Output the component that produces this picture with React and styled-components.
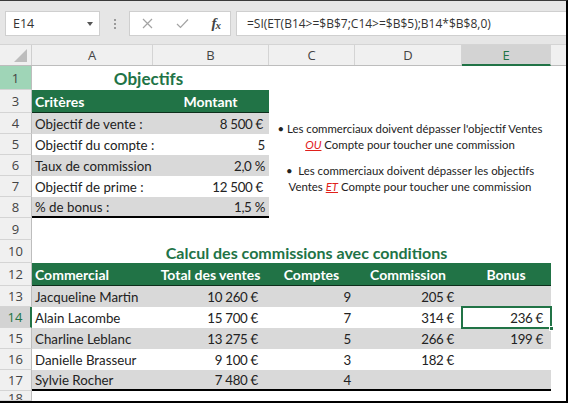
import React from 'react';
import styled, { createGlobalStyle, css } from 'styled-components';

const W = { A: 121, B: 116, C: 86, D: 107, E: 89 };
const GREEN = '#217346';

const Global = createGlobalStyle`
  html, body { margin: 0; background: #fff; }
`;

const Frame = styled.div`
  position: relative;
  width: 568px;
  height: 403px;
  box-sizing: border-box;
  border-top: 1px solid #3a3a3a;
  border-right: 2px solid #000;
  border-bottom: 2px solid #000;
  background: #fff;
  overflow: hidden;
  display: flex;
  flex-direction: column;
  font-family: Lato, "Open Sans", sans-serif;
`;

const Toolbar = styled.div`
  height: 43px;
  flex-shrink: 0;
  box-sizing: border-box;
  background: #e6e6e6;
  display: flex;
  align-items: flex-start;
  padding: 10px 0 0 5px;
`;

const Box = styled.div`
  height: 25px;
  box-sizing: border-box;
  background: #fff;
  border: 1px solid #cfcfcf;
  display: flex;
  align-items: center;
  flex-shrink: 0;
`;

const NameBox = styled(Box)`
  width: 95px;
  padding: 0 6px 0 7px;
  justify-content: space-between;
  font-family: "Open Sans", sans-serif;
  font-size: 12.5px;
  color: #333;
`;

const Caret = styled.span`
  width: 0;
  height: 0;
  border-left: 3px solid transparent;
  border-right: 3px solid transparent;
  border-top: 4px solid #555;
`;

const Dots = styled.div`
  width: 29px;
  height: 25px;
  display: flex;
  flex-direction: column;
  align-items: center;
  justify-content: center;
  gap: 2px;
  flex-shrink: 0;
  span {
    width: 2px;
    height: 2px;
    background: #9a9a9a;
  }
`;

const FxBox = styled(Box)`
  width: 102px;
  padding: 0 10px 0 12px;
  justify-content: space-between;
`;

const Fx = styled.span`
  font-family: "Liberation Serif", serif;
  font-style: italic;
  font-weight: bold;
  font-size: 15px;
  color: #444;
  letter-spacing: -1px;
  sub {
    font-size: 11px;
    vertical-align: -1px;
  }
`;

const FormulaBox = styled(Box)`
  margin-left: 5px;
  flex: 1;
  border-right: none;
  padding-left: 10px;
  font-family: "Open Sans", sans-serif;
  font-size: 12px;
  color: #333;
  white-space: nowrap;
  overflow: hidden;
`;

const HeaderRow = styled.div`
  display: flex;
  height: 22px;
  flex-shrink: 0;
  box-sizing: border-box;
  border-top: 1px solid #d4d4d4;
  border-bottom: 1px solid #bdbdbd;
  background: #f0f0f0;
`;

const Corner = styled.div`
  width: 32px;
  flex-shrink: 0;
  box-sizing: border-box;
  border-right: 1px solid #cfcfcf;
  display: flex;
  align-items: flex-end;
  justify-content: flex-end;
  padding: 0 4px 3px 0;
`;

const ColHead = styled.div`
  width: ${(p) => p.$w}px;
  flex-shrink: 0;
  box-sizing: border-box;
  border-right: 1px solid #d4d4d4;
  display: flex;
  align-items: center;
  justify-content: center;
  font-family: "Open Sans", sans-serif;
  font-size: 13px;
  color: #444;
  ${(p) =>
    p.$active &&
    css`
      background: #d3d3d3;
      color: ${GREEN};
      border-bottom: 2px solid ${GREEN};
      margin-bottom: -1px;
    `}
`;

const Filler = styled.div`
  flex: 1;
`;

const Row = styled.div`
  display: flex;
  height: ${(p) => p.$h}px;
  flex-shrink: 0;
  overflow: hidden;
`;

const RowHead = styled.div`
  width: 32px;
  flex-shrink: 0;
  box-sizing: border-box;
  background: ${(p) => (p.$hl ? '#9fd5b7' : p.$active ? '#d3d3d3' : '#f0f0f0')};
  border-bottom: 1px solid #d4d4d4;
  border-right: ${(p) => (p.$active ? `2px solid ${GREEN}` : '1px solid #bdbdbd')};
  display: flex;
  align-items: ${(p) => (p.$clip ? 'flex-start' : 'center')};
  padding-top: ${(p) => (p.$clip ? 2 : 0)}px;
  justify-content: center;
  overflow: hidden;
  font-family: "Open Sans", sans-serif;
  font-size: 13px;
  line-height: ${(p) => (p.$clip ? '10px' : 'normal')};
  color: ${(p) => (p.$active ? GREEN : '#444')};
`;

const Cell = styled.div`
  position: relative;
  width: ${(p) => p.$w}px;
  flex-shrink: 0;
  box-sizing: border-box;
  display: flex;
  align-items: center;
  justify-content: ${(p) => (p.$align === 'right' ? 'flex-end' : p.$align === 'center' ? 'center' : 'flex-start')};
  padding: 0 ${(p) => p.$pr ?? 4}px 0 ${(p) => p.$pl ?? 3}px;
  font-size: 13.3px;
  letter-spacing: ${(p) => (p.$align === 'right' ? '-0.3px' : '0')};
  color: #222;
  white-space: nowrap;
  background: ${(p) => (p.$band ? '#d9d9d9' : 'transparent')};
  ${(p) => p.$bottom && css`border-bottom: 2px solid #000;`}
  ${(p) =>
    p.$selected &&
    css`
      outline: 2px solid ${GREEN};
      outline-offset: -1px;
      &::after {
        content: '';
        position: absolute;
        right: -3px;
        bottom: -3px;
        width: 5px;
        height: 5px;
        background: ${GREEN};
        border: 1px solid #fff;
        box-sizing: border-box;
      }
    `}
`;

const SelRow = styled(Row)`
  overflow: visible;
  position: relative;
  z-index: 1;
`;

const HeadCell = styled(Cell)`
  background: ${GREEN};
  color: #fff;
  font-weight: bold;
  font-size: 14px;
  letter-spacing: 0;
  border-bottom: 1px solid #0d2e1b;
`;

const Title = styled(Cell)`
  justify-content: center;
  align-items: flex-end;
  padding-bottom: 1px;
  color: ${GREEN};
  font-weight: bold;
  font-size: ${(p) => p.$size}px;
  padding-left: ${(p) => p.$shift || 0}px;
`;

const Note = styled.div`
  position: absolute;
  left: 272px;
  top: 120px;
  width: 276px;
  text-align: center;
  font-size: 11.4px;
  line-height: 16px;
  color: #222;
  white-space: nowrap;
`;

const Para = styled.p`
  margin: 0 0 10px;
`;

const Cond = styled.em`
  color: #e0201b;
  font-style: italic;
  text-decoration: underline;
`;

const objectifs = [
  ['Objectif de vente :', '8 500 €', 6],
  ['Objectif du compte :', '5', 4],
  ['Taux de commission :', '2,0 %', 4],
  ['Objectif de prime :', '12 500 €', 6],
  ['% de bonus :', '1,5 %', 4],
];

const ventes = [
  ['Jacqueline Martin', '10 260 €', '9', '205 €', ''],
  ['Alain Lacombe', '15 700 €', '7', '314 €', '236 €'],
  ['Charline Leblanc', '13 275 €', '5', '266 €', '199 €'],
  ['Danielle Brasseur', '9 100 €', '3', '182 €', ''],
  ['Sylvie Rocher', '7 480 €', '4', '', ''],
];

function XIcon() {
  return (
    <svg width="11" height="11" viewBox="0 0 11 11">
      <path d="M1 1 L10 10 M10 1 L1 10" stroke="#a3a3a3" strokeWidth="1.2" fill="none" />
    </svg>
  );
}

function CheckIcon() {
  return (
    <svg width="13" height="11" viewBox="0 0 13 11">
      <path d="M1 6 L4.5 9.5 L12 1.5" stroke="#a3a3a3" strokeWidth="1.2" fill="none" />
    </svg>
  );
}

function CornerMark() {
  return (
    <svg width="13" height="13" viewBox="0 0 13 13">
      <path d="M13 0 L13 13 L0 13 Z" fill="#bdbdbd" />
    </svg>
  );
}

export default function App() {
  return (
    <>
      <Global />
      <Frame>
        <Toolbar>
          <NameBox>
            E14
            <Caret />
          </NameBox>
          <Dots>
            <span />
            <span />
            <span />
          </Dots>
          <FxBox>
            <XIcon />
            <CheckIcon />
            <Fx>
              f<sub>x</sub>
            </Fx>
          </FxBox>
          <FormulaBox>=SI(ET(B14&gt;=$B$7;C14&gt;=$B$5);B14*$B$8,0)</FormulaBox>
        </Toolbar>

        <HeaderRow>
          <Corner>
            <CornerMark />
          </Corner>
          <ColHead $w={W.A}>A</ColHead>
          <ColHead $w={W.B}>B</ColHead>
          <ColHead $w={W.C}>C</ColHead>
          <ColHead $w={W.D}>D</ColHead>
          <ColHead $w={W.E} $active>
            E
          </ColHead>
          <Filler />
        </HeaderRow>

        <Row $h={24}>
          <RowHead $hl>1</RowHead>
          <Title $w={W.A + W.B} $size={17}>
            Objectifs
          </Title>
        </Row>
        <Row $h={23}>
          <RowHead>3</RowHead>
          <HeadCell $w={W.A}>Critères</HeadCell>
          <HeadCell $w={W.B} $align="center">
            Montant
          </HeadCell>
        </Row>
        {objectifs.map(([label, value, pr], i) => (
          <Row $h={21} key={label}>
            <RowHead>{i + 4}</RowHead>
            <Cell $w={W.A} $band={i % 2 === 0} $bottom={i === 4}>
              {label}
            </Cell>
            <Cell $w={W.B} $align="right" $pr={pr} $band={i % 2 === 0} $bottom={i === 4}>
              {value}
            </Cell>
          </Row>
        ))}
        <Row $h={22}>
          <RowHead>9</RowHead>
        </Row>
        <Row $h={23}>
          <RowHead>10</RowHead>
          <Title $w={W.A + W.B + W.C + W.D + W.E} $size={16} $shift={34}>
            Calcul des commissions avec conditions
          </Title>
        </Row>
        <Row $h={23}>
          <RowHead>12</RowHead>
          <HeadCell $w={W.A}>Commercial</HeadCell>
          <HeadCell $w={W.B} $align="center">
            Total des ventes
          </HeadCell>
          <HeadCell $w={W.C} $align="center">
            Comptes
          </HeadCell>
          <HeadCell $w={W.D} $align="center">
            Commission
          </HeadCell>
          <HeadCell $w={W.E} $align="center">
            Bonus
          </HeadCell>
        </Row>
        {ventes.map(([name, total, comptes, commission, bonus], i) => {
          const band = i % 2 === 0;
          const last = i === 4;
          const R = i === 1 ? SelRow : Row;
          return (
            <R $h={21} key={name}>
              <RowHead $active={i === 1}>{i + 13}</RowHead>
              <Cell $w={W.A} $band={band} $bottom={last}>
                {name}
              </Cell>
              <Cell $w={W.B} $align="right" $pr={11} $band={band} $bottom={last}>
                {total}
              </Cell>
              <Cell $w={W.C} $align="right" $pr={4} $band={band} $bottom={last}>
                {comptes}
              </Cell>
              <Cell $w={W.D} $align="right" $pr={8} $band={band} $bottom={last}>
                {commission}
              </Cell>
              <Cell $w={W.E} $align="right" $pr={8} $band={band} $bottom={last} $selected={i === 1}>
                {bonus}
              </Cell>
            </R>
          );
        })}
        <Row $h={10}>
          <RowHead $clip>18</RowHead>
        </Row>

        <Note>
          <Para>
            • Les commerciaux doivent dépasser l'objectif Ventes
            <br />
            <Cond>OU</Cond> Compte pour toucher une commission
          </Para>
          <Para>
            •&nbsp; Les commerciaux doivent dépasser les objectifs
            <br />
            Ventes <Cond>ET</Cond> Compte pour toucher une commission
          </Para>
        </Note>
      </Frame>
    </>
  );
}
